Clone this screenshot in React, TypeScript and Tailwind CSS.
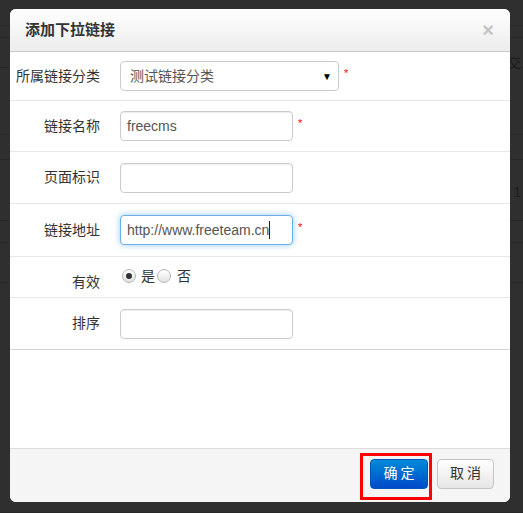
const cjk = "font-['Liberation_Sans','Noto_Sans_CJK_SC',sans-serif]";

function Field({ value = '', focused = false }: { value?: string; focused?: boolean }) {
  return (
    <div
      className={
        'w-[173px] h-[30px] rounded-[4px] border bg-white flex items-center px-[6px] text-[14px] text-[#555] ' +
        (focused
          ? 'border-[#6aaee8] shadow-[0_0_6px_rgba(82,168,236,0.6)]'
          : 'border-[#ccc] shadow-[inset_0_1px_1px_rgba(0,0,0,0.075)]')
      }
    >
      <span>{value}</span>
      {focused && <span className="w-px h-[18px] bg-[#222]" />}
    </div>
  );
}

function Star() {
  return <span className="text-[#f00] text-[11px] leading-none ml-[5px] -mt-[6px]">*</span>;
}

function Row({ label, h, last = false, children }: { label: string; h: string; last?: boolean; children: React.ReactNode }) {
  return (
    <div className={`flex items-center ${h} border-b ${last ? 'border-[#d4d4d4]' : 'border-[#e8e8e8]'}`}>
      <div className="w-[90px] text-right text-[14px] text-[#333]">{label}</div>
      <div className="ml-[20px] flex items-center">{children}</div>
    </div>
  );
}

function Radio({ checked }: { checked?: boolean }) {
  return (
    <span className="w-[14px] h-[14px] shrink-0 rounded-full border border-[#b5b5b5] bg-gradient-to-b from-white to-[#e2e2e2] flex items-center justify-center">
      {checked && <span className="w-[6px] h-[6px] rounded-full bg-[#333]" />}
    </span>
  );
}

export default function App() {
  const bgRows = ['h-[26px]', 'h-[12px]', 'h-[30px]', 'h-[67px]', 'h-[25px]', 'h-[61px]', 'h-[22px]', 'h-[40px]', 'h-[230px]'];
  return (
    <div className={`relative w-[523px] h-[513px] overflow-hidden bg-[#2f2f2f] ${cjk}`}>
      {/* page behind the overlay */}
      <div className="flex flex-col">
        {bgRows.map((r, i) => (
          <div key={i} className={`${r} border-b border-[#272727] flex items-center justify-end pr-[2px] text-[#1c1c1c] text-[14px]`}>
            {i === 2 && <span className="mt-[22px]">提 交</span>}
            {i === 5 && <span className="mt-[5px] text-[#1e1e1e]">1</span>}
          </div>
        ))}
      </div>

      <div className="absolute left-[10px] top-[9px] w-[500px] h-[493px] bg-white rounded-[6px] overflow-hidden flex flex-col">
        <div className="h-[43px] shrink-0 flex items-center justify-between px-[15px] bg-gradient-to-b from-white to-[#ececec] border-b border-[#c9c9c9]">
          <span className="text-[15px] font-bold text-[#333] pt-[1px]">添加下拉链接</span>
          <span className="text-[20px] font-bold text-[#c4c4c4] leading-none pr-[1px]">×</span>
        </div>

        <Row label="所属链接分类" h="h-[49px]">
          <div className="w-[219px] h-[30px] rounded-[4px] border border-[#ccc] bg-white flex items-center justify-between pl-[9px] pr-[6px] text-[14px] text-[#555]">
            <span>测试链接分类</span>
            <span className="text-[10px] text-black">▼</span>
          </div>
          <Star />
        </Row>
        <Row label="链接名称" h="h-[51px]">
          <Field value="freecms" />
          <Star />
        </Row>
        <Row label="页面标识" h="h-[52px]">
          <Field />
        </Row>
        <Row label="链接地址" h="h-[53px]">
          <Field value="http://www.freeteam.cn" focused />
          <Star />
        </Row>
        <div className="flex h-[41px] border-b border-[#e8e8e8]">
          <div className="w-[90px] text-right text-[14px] text-[#333] pt-[15px]">有效</div>
          <div className="ml-[22px] flex items-center text-[14px] text-[#333] pb-[2px]">
            <Radio checked />
            <span className="ml-[5px]">是</span>
            <span className="ml-[2px] flex"><Radio /></span>
            <span className="ml-[6px]">否</span>
          </div>
        </div>
        <Row label="排序" h="h-[52px]" last>
          <Field />
        </Row>

        <div className="flex-1" />

        <div className="relative h-[54px] shrink-0 bg-[#f5f5f5] border-t border-[#dcdcdc] flex items-center justify-end gap-[9px] pr-[16px] pb-[4px]">
          <button className="w-[58px] h-[30px] rounded-[4px] border border-[#0055bb] bg-gradient-to-b from-[#0a8ad8] to-[#0048c8] text-white text-[14px] tracking-[3px] pl-[3px]">
            确定
          </button>
          <button className="w-[57px] h-[30px] rounded-[4px] border border-[#c5c5c5] bg-gradient-to-b from-white to-[#e6e6e6] text-[#333] text-[14px] tracking-[3px] pl-[3px]">
            取消
          </button>
          <div className="absolute left-[350px] top-[4px] w-[72px] h-[47px] border-[3px] border-[#f00]" />
        </div>
      </div>
    </div>
  );
}
